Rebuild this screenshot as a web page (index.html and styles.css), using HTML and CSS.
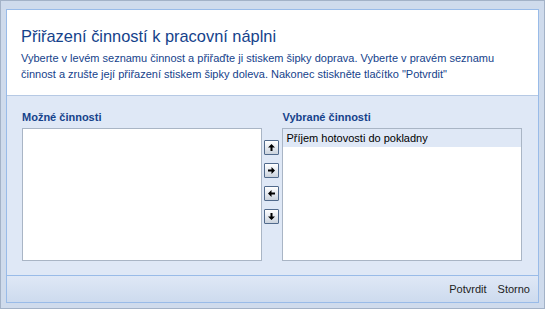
FILE: index.html
```html
<!DOCTYPE html>
<html lang="cs">

<head>
    <meta charset="UTF-8">
    <meta name="viewport" content="width=device-width, initial-scale=1.0">
    <title>Přiřazení činností</title>
    <link rel="stylesheet" href="styles.css">
</head>

<body>
    <div class="window">
        <div class="panel">
            <div class="header">
                <h1>Přiřazení činností k pracovní náplni</h1>
                <p>Vyberte v levém seznamu činnost a přiřaďte ji stiskem šipky doprava. Vyberte v pravém seznamu
                    činnost a zrušte její přiřazení stiskem šipky doleva. Nakonec stiskněte tlačítko "Potvrdit"</p>
            </div>
            <div class="content">
                <div class="column">
                    <div class="list-label">Možné činnosti</div>
                    <div class="list"></div>
                </div>
                <div class="arrows">
                    <button class="arrow" title="Nahoru">
                        <svg width="9" height="9" viewBox="0 0 9 9"><path d="M4.5 1 L8 4.5 H5.5 V8 H3.5 V4.5 H1 Z" fill="#000"/></svg>
                    </button>
                    <button class="arrow" title="Přiřadit">
                        <svg width="9" height="9" viewBox="0 0 9 9"><path d="M8 4.5 L4.5 1 V3.5 H1 V5.5 H4.5 V8 Z" fill="#000"/></svg>
                    </button>
                    <button class="arrow" title="Odebrat">
                        <svg width="9" height="9" viewBox="0 0 9 9"><path d="M1 4.5 L4.5 1 V3.5 H8 V5.5 H4.5 V8 Z" fill="#000"/></svg>
                    </button>
                    <button class="arrow" title="Dolů">
                        <svg width="9" height="9" viewBox="0 0 9 9"><path d="M4.5 8 L8 4.5 H5.5 V1 H3.5 V4.5 H1 Z" fill="#000"/></svg>
                    </button>
                </div>
                <div class="column">
                    <div class="list-label">Vybrané činnosti</div>
                    <div class="list">
                        <div class="list-item selected">Příjem hotovosti do pokladny</div>
                    </div>
                </div>
            </div>
            <div class="footer">
                <button class="footer-btn">Potvrdit</button>
                <button class="footer-btn">Storno</button>
            </div>
        </div>
    </div>
</body>

</html>
```

FILE: styles.css
```css
body {
    margin: 0;
    font-family: "Liberation Sans", Arial, sans-serif;
    font-size: 11px;
}

.window {
    width: 545px;
    height: 309px;
    box-sizing: border-box;
    border: 1px solid #a3b2c7;
    background: #cfdbec;
    padding: 8px 5px 5px 5px;
}

.panel {
    height: 100%;
    box-sizing: border-box;
    border: 1px solid #99bbe8;
    display: flex;
    flex-direction: column;
}

.header {
    background: #fff;
    height: 85px;
    border-bottom: 1px solid #b6c9e4;
    padding: 0 14px;
}

.header h1 {
    margin: 16px 0 0 0;
    font-size: 16.4px;
    font-weight: normal;
    color: #15428b;
    line-height: 20px;
}

.header p {
    margin: 4px 0 0 0;
    color: #15428b;
    line-height: 16px;
}

.content {
    background: #dfe8f6;
    flex: 1;
    display: flex;
    padding: 14px 16px 14px 15px;
}

.column {
    display: flex;
    flex-direction: column;
    width: 240px;
}

.list-label {
    font-weight: bold;
    color: #15428b;
    height: 18px;
    line-height: 14px;
}

.list {
    flex: 1;
    background: #fff;
    border: 1px solid #a9b5c5;
}

.list-item {
    height: 18px;
    line-height: 18px;
    padding-left: 3px;
    color: #000;
}

.list-item.selected {
    background: #dfe8f6;
}

.arrows {
    width: 21px;
    display: flex;
    flex-direction: column;
    align-items: center;
    padding-top: 30px;
    gap: 8px;
}

.arrow {
    width: 15px;
    height: 15px;
    padding: 0;
    border: 1px solid #516a8c;
    border-radius: 1px;
    background: linear-gradient(#ffffff, #e3e8ef 55%, #cbd3dd);
    display: flex;
    align-items: center;
    justify-content: center;
}

.footer {
    height: 26px;
    border-top: 1px solid #99bbe8;
    background: linear-gradient(#dfe8f6, #cddbee);
    display: flex;
    justify-content: flex-end;
    align-items: center;
    padding-right: 4px;
    gap: 3px;
}

.footer-btn {
    background: none;
    border: none;
    font-family: inherit;
    font-size: 11px;
    color: #222;
    padding: 0 4px;
}
```
